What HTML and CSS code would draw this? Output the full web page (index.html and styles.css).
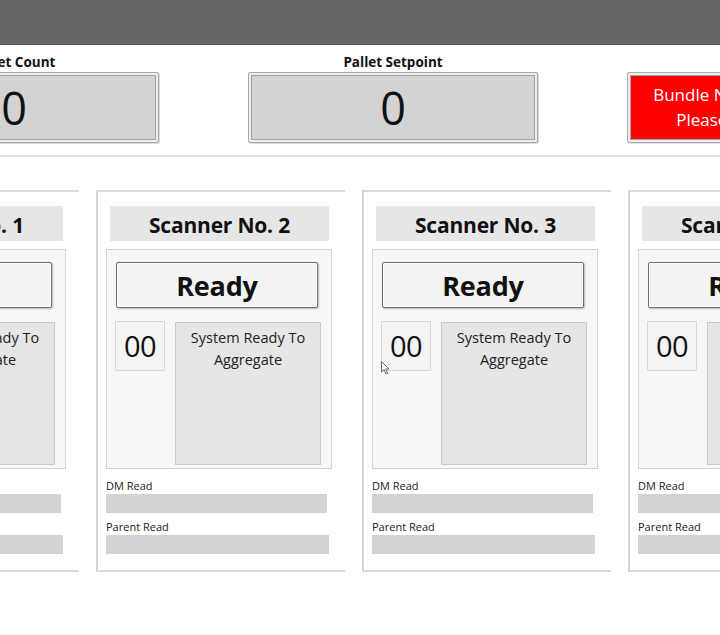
FILE: index.html
```html
<!DOCTYPE html>
<html>
<head>
<meta charset="utf-8">
<link rel="stylesheet" href="styles.css">
</head>
<body>
<div class="topbar"></div>
<div class="stats">
  <div class="stat">
    <div class="stat-label">Pallet Count</div>
    <div class="display">0</div>
  </div>
  <div class="stat">
    <div class="stat-label">Pallet Setpoint</div>
    <div class="display">0</div>
  </div>
  <div class="stat alarm-stat">
    <div class="stat-label">&nbsp;</div>
    <div class="display alarm">Bundle Not Detected<br>Please Remove</div>
  </div>
</div>
<div class="divider"></div>
<div class="cards">
  <div class="card">
    <div class="card-title">Scanner No. 1</div>
    <div class="panel">
      <div class="status-btn">Ready</div>
      <div class="panel-row">
        <div class="count">00</div>
        <div class="message">System Ready To Aggregate</div>
      </div>
    </div>
    <div class="field-label">DM Read</div>
    <div class="field-bar dm"></div>
    <div class="field-label parent">Parent Read</div>
    <div class="field-bar"></div>
  </div>
  <div class="card">
    <div class="card-title">Scanner No. 2</div>
    <div class="panel">
      <div class="status-btn">Ready</div>
      <div class="panel-row">
        <div class="count">00</div>
        <div class="message">System Ready To Aggregate</div>
      </div>
    </div>
    <div class="field-label">DM Read</div>
    <div class="field-bar dm"></div>
    <div class="field-label parent">Parent Read</div>
    <div class="field-bar"></div>
  </div>
  <div class="card">
    <div class="card-title">Scanner No. 3</div>
    <div class="panel">
      <div class="status-btn">Ready</div>
      <div class="panel-row">
        <div class="count">00</div>
        <div class="message">System Ready To Aggregate</div>
      </div>
    </div>
    <div class="field-label">DM Read</div>
    <div class="field-bar dm"></div>
    <div class="field-label parent">Parent Read</div>
    <div class="field-bar"></div>
  </div>
  <div class="card">
    <div class="card-title">Scanner No. 4</div>
    <div class="panel">
      <div class="status-btn">Ready</div>
      <div class="panel-row">
        <div class="count">00</div>
        <div class="message">System Ready To Aggregate</div>
      </div>
    </div>
    <div class="field-label">DM Read</div>
    <div class="field-bar dm"></div>
    <div class="field-label parent">Parent Read</div>
    <div class="field-bar"></div>
  </div>
</div>
<svg class="cursor" width="10" height="14" viewBox="0 0 10 14">
  <path d="M0.5 0.5 L0.5 11 L3 8.6 L5 13 L6.6 12.3 L4.7 8 L8 8 Z" fill="#fff" stroke="#666" stroke-width="1" stroke-linejoin="round"/>
</svg>
</body>
</html>
```
FILE: styles.css
```css
html, body {
  margin: 0;
  padding: 0;
  background: #ffffff;
  width: 720px;
  height: 635px;
  overflow: hidden;
  position: relative;
  font-family: "Open Sans", "Noto Sans", sans-serif;
  color: #111;
}

.topbar {
  height: 44px;
  background: #656565;
  border-bottom: 1px solid #555;
}

.stats {
  display: flex;
  gap: 89px;
  margin-left: -131px;
  padding-top: 8px;
}

.stat {
  width: 290px;
  flex: none;
  display: flex;
  flex-direction: column;
}

.alarm-stat {
  width: 218px;
}

.stat-label {
  height: 18px;
  line-height: 18px;
  font-size: 13.5px;
  font-weight: 700;
  text-align: center;
  margin-bottom: 1px;
}

.display {
  box-sizing: border-box;
  height: 71px;
  background: #d3d3d3;
  border: 1px solid #a9a9a9;
  box-shadow: inset 0 0 0 2px #ededed, inset 0 0 0 3px #a3a3a3, 1px 1px 1px rgba(0,0,0,0.15);
  border-radius: 2px;
  font-size: 45px;
  font-weight: 400;
  line-height: 69px;
  text-align: center;
  color: #111;
}

.display.alarm {
  background: #ff0000;
  color: #fff;
  font-size: 17px;
  line-height: 25px;
  padding-top: 9px;
  white-space: nowrap;
}

.divider {
  height: 2px;
  background: #dedede;
  margin-top: 12px;
}

.cards {
  display: flex;
  gap: 17px;
  margin-left: -170px;
  margin-top: 33px;
}

.card {
  flex: none;
  box-sizing: border-box;
  width: 249px;
  height: 382px;
  border-top: 2px solid #dadada;
  border-left: 2px solid #d4d4d4;
  border-bottom: 2px solid #dadada;
  padding: 14px 0 0 8px;
}

.card-title {
  margin-left: 4px;
  width: 219px;
  height: 35px;
  background: #e6e6e6;
  font-size: 21px;
  font-weight: 700;
  line-height: 38px;
  text-align: center;
  letter-spacing: -0.2px;
}

.panel {
  box-sizing: border-box;
  margin-top: 8px;
  width: 226px;
  height: 220px;
  background: #f7f7f7;
  border: 1px solid #d3d3d3;
  padding: 12px 0 0 9px;
}

.status-btn {
  box-sizing: border-box;
  width: 202px;
  height: 46px;
  background: #f3f3f3;
  border: 1px solid #6e6e6e;
  border-radius: 2px;
  box-shadow: inset 0 0 0 1px #fff, 1px 1px 2px rgba(0,0,0,0.25);
  font-size: 27px;
  font-weight: 700;
  line-height: 46px;
  text-align: center;
  letter-spacing: -0.2px;
}

.panel-row {
  display: flex;
  align-items: flex-start;
  margin-top: 13px;
}

.count {
  box-sizing: border-box;
  width: 50px;
  height: 50px;
  margin-left: -1px;
  background: #f4f4f4;
  border: 1px solid #d6d6d6;
  font-size: 29px;
  line-height: 48px;
  text-align: center;
  letter-spacing: -0.5px;
}

.message {
  box-sizing: border-box;
  width: 146px;
  height: 143px;
  margin-left: 10px;
  margin-top: 1px;
  background: #e6e6e6;
  border: 1px solid #c9c9c9;
  padding: 4px 8px 0;
  font-size: 14.5px;
  line-height: 22px;
  text-align: center;
  color: #222;
}

.field-label {
  margin-top: 9px;
  font-size: 11px;
  line-height: 15px;
  color: #222;
}

.field-label.parent {
  margin-top: 6px;
}

.field-bar {
  margin-top: 1px;
  width: 223px;
  height: 19px;
  background: #d3d3d3;
}

.field-bar.dm {
  width: 221px;
}

.cursor {
  position: absolute;
  left: 381px;
  top: 361px;
}
```
